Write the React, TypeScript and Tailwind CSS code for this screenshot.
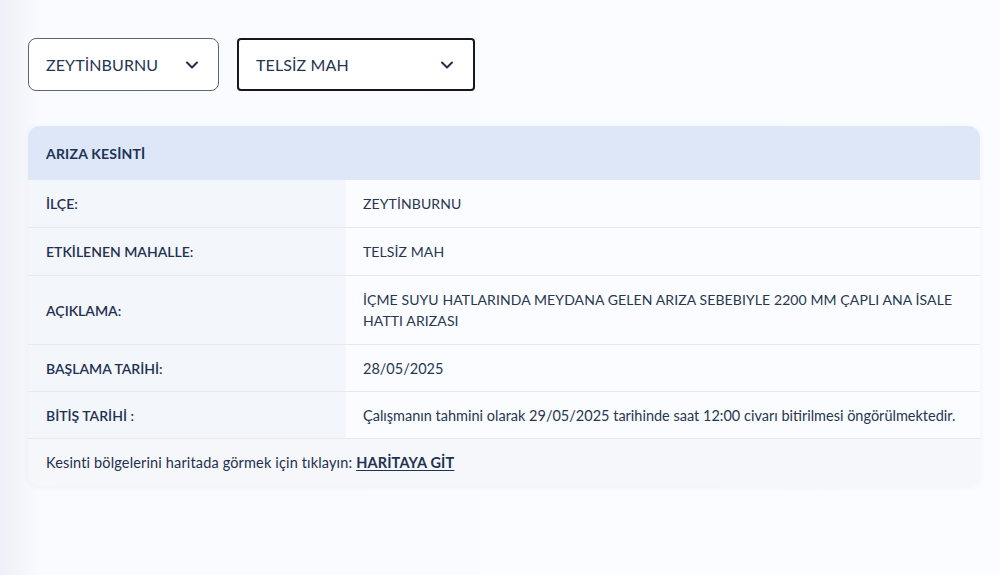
import { ChevronDown } from "lucide-react";

const rows: { label: string; value: string; tall?: boolean; sentence?: boolean }[] = [
  { label: "İLÇE:", value: "ZEYTİNBURNU", tall: true },
  { label: "ETKİLENEN MAHALLE:", value: "TELSİZ MAH", tall: true },
  {
    label: "AÇIKLAMA:",
    value: "İÇME SUYU HATLARINDA MEYDANA GELEN ARIZA SEBEBIYLE 2200 MM ÇAPLI ANA İSALE HATTI ARIZASI",
  },
  { label: "BAŞLAMA TARİHİ:", value: "28/05/2025", sentence: true },
  {
    label: "BİTİŞ TARİHİ :",
    value: "Çalışmanın tahmini olarak 29/05/2025 tarihinde saat 12:00 civarı bitirilmesi öngörülmektedir.",
    sentence: true,
  },
];

function Select({ value, focused, width }: { value: string; focused?: boolean; width: string }) {
  return (
    <div
      className={
        focused
          ? `${width} h-[53px] flex items-center justify-between pl-[17px] pr-[16px] border-2 border-[#15181e] rounded-[4px] bg-white`
          : `${width} h-[53px] flex items-center justify-between pl-[17px] pr-[16px] border border-[#5d6576] rounded-lg bg-white`
      }
    >
      <span className="text-[16px] text-[#243453] tracking-[0.1px]">{value}</span>
      <ChevronDown className="w-5 h-5 text-[#1f2f4d]" strokeWidth={2.4} />
    </div>
  );
}

export default function App() {
  return (
    <div
      className="w-[1000px] h-[575px] bg-gradient-to-r from-[#edf0f7] via-[#fafbfe] via-[4%] to-[#fbfcff] text-[#1f2f4f] overflow-hidden"
      style={{ fontFamily: "Lato, 'Noto Sans', sans-serif" }}
    >
      <div className="pl-[28px] pr-[20px] pt-[38px]">
        <div className="flex gap-[18px]">
          <Select value="ZEYTİNBURNU" width="w-[191px]" />
          <Select value="TELSİZ MAH" width="w-[238px]" focused />
        </div>

        <div className="mt-[35px] w-[952px] rounded-xl overflow-hidden shadow-[0_1px_6px_rgba(40,60,110,0.06)] bg-[#f5f7fb]">
          <div className="h-[54px] bg-[#dde7f7] flex items-center px-[18px]">
            <span className="text-[14px] font-bold tracking-[0.2px] text-[#1e3354]">ARIZA KESİNTİ</span>
          </div>
          {rows.map((r) => (
            <div
              key={r.label}
              className={
                r.tall
                  ? "flex border-b border-[#e5e9f0] min-h-[48px]"
                  : "flex border-b border-[#e5e9f0] min-h-[47px]"
              }
            >
              <div className="w-[318px] shrink-0 bg-[#f3f6fb] flex items-center px-[18px] text-[14px] font-semibold text-[#1f3150]">
                {r.label}
              </div>
              <div
                className={
                  r.sentence
                    ? "flex-1 bg-[#fafcff] flex items-center pl-[17px] pr-[16px] py-[12px] text-[14.5px] leading-[21px] text-[#27374f]"
                    : "flex-1 bg-[#fafcff] flex items-center pl-[17px] pr-[16px] py-[13px] text-[14px] tracking-[0.1px] leading-[21px] text-[#27374f]"
                }
              >
                {r.value}
              </div>
            </div>
          ))}
          <div className="h-[47px] flex items-center px-[18px] text-[14.5px] tracking-[0.15px] text-[#1f2f4f]">
            <span>Kesinti bölgelerini haritada görmek için tıklayın:&nbsp;</span>
            <a className="font-bold underline underline-offset-2 text-[#1e3354]">HARİTAYA GİT</a>
          </div>
        </div>
      </div>
    </div>
  );
}
